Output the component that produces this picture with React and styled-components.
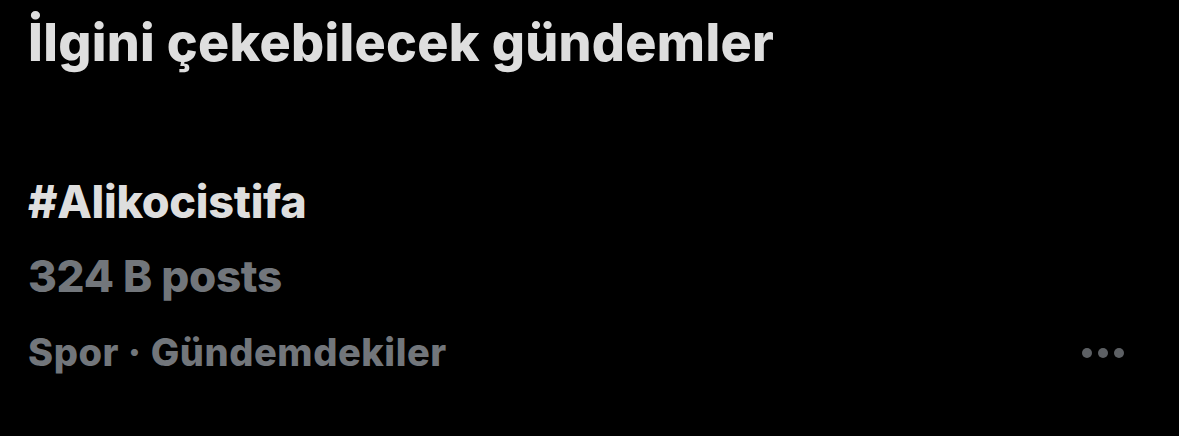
import React from 'react';
import styled, { createGlobalStyle } from 'styled-components';

const Global = createGlobalStyle`
  html, body {
    margin: 0;
    background: #000;
  }
  body {
    font-family: Inter, "Noto Sans", sans-serif;
    -webkit-font-smoothing: antialiased;
  }
`;

const Page = styled.div`
  width: 1179px;
  height: 436px;
  background: #000;
  padding: 12px 28px 0 28px;
  box-sizing: border-box;
`;

const Title = styled.h2`
  margin: 0;
  font-size: 52px;
  line-height: 1.21;
  font-weight: 800;
  color: #dedede;
  letter-spacing: 0.3px;
`;

const Trend = styled.div`
  margin-top: 100px;
  display: flex;
  flex-direction: column;
`;

const TrendRow = styled.div`
  display: flex;
  align-items: center;
  justify-content: space-between;
  margin-top: 26px;
`;

const Line = styled.div`
  font-size: ${p => p.$size || 45}px;
  line-height: 1.21;
  font-weight: 800;
  letter-spacing: ${p => p.$ls || 0}px;
  color: ${p => (p.$muted ? '#72767b' : '#dedede')};
  margin-top: ${p => p.$mt || 0}px;
`;

const More = styled.button`
  background: none;
  border: 0;
  padding: 0;
  margin-right: 27px;
  display: flex;
  gap: 6px;
  cursor: pointer;
`;

const Dot = styled.span`
  width: 10px;
  height: 10px;
  border-radius: 50%;
  background: #5d6064;
`;

export default function App() {
  return (
    <>
      <Global />
      <Page>
        <Title>İlgini çekebilecek gündemler</Title>
        <Trend>
          <Line $size={45} $ls={-0.3}>#Alikocistifa</Line>
          <Line $muted $size={44} $ls={-0.3} $mt={21}>324 B posts</Line>
          <TrendRow>
            <Line $muted $size={38} $ls={0.55}>Spor · Gündemdekiler</Line>
            <More aria-label="More">
              <Dot />
              <Dot />
              <Dot />
            </More>
          </TrendRow>
        </Trend>
      </Page>
    </>
  );
}
